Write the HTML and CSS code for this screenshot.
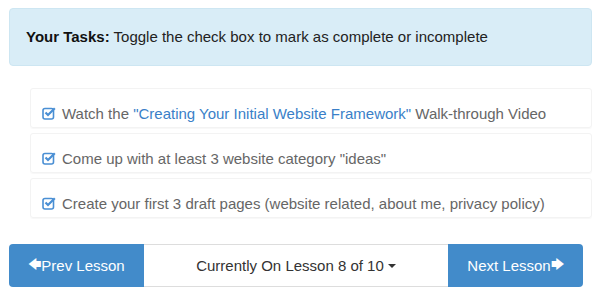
FILE: index.html
```html
<!DOCTYPE html>
<html lang="en">
<head>
    <meta charset="UTF-8">
    <title>Lesson Tasks</title>
    <link rel="stylesheet" href="styles.css">
</head>
<body>
    <div class="page">
        <div class="alert">
            <strong>Your Tasks:</strong> Toggle the check box to mark as complete or incomplete
        </div>

        <ul class="tasks">
            <li class="task">
                <svg class="check" viewBox="0 0 14 14" width="14" height="14">
                    <rect x="1" y="2.5" width="10.5" height="10.5" rx="2" fill="none" stroke="#4a8fd4" stroke-width="1.6"/>
                    <path d="M3.5 6.5 L6 9 L12.8 2.2" fill="none" stroke="#4a8fd4" stroke-width="2.2"/>
                </svg>
                <span>Watch the <a href="#">"Creating Your Initial Website Framework"</a> Walk-through Video</span>
            </li>
            <li class="task">
                <svg class="check" viewBox="0 0 14 14" width="14" height="14">
                    <rect x="1" y="2.5" width="10.5" height="10.5" rx="2" fill="none" stroke="#4a8fd4" stroke-width="1.6"/>
                    <path d="M3.5 6.5 L6 9 L12.8 2.2" fill="none" stroke="#4a8fd4" stroke-width="2.2"/>
                </svg>
                <span>Come up with at least 3 website category "ideas"</span>
            </li>
            <li class="task">
                <svg class="check" viewBox="0 0 14 14" width="14" height="14">
                    <rect x="1" y="2.5" width="10.5" height="10.5" rx="2" fill="none" stroke="#4a8fd4" stroke-width="1.6"/>
                    <path d="M3.5 6.5 L6 9 L12.8 2.2" fill="none" stroke="#4a8fd4" stroke-width="2.2"/>
                </svg>
                <span>Create your first 3 draft pages (website related, about me, privacy policy)</span>
            </li>
        </ul>

        <div class="lesson-nav">
            <a href="#" class="btn btn-primary"><span class="arrow">&#x1F844;</span>Prev Lesson</a>
            <button class="btn btn-current">Currently On Lesson 8 of 10 <span class="caret"></span></button>
            <a href="#" class="btn btn-primary">Next Lesson<span class="arrow">&#x1F846;</span></a>
        </div>
    </div>
</body>
</html>
```

FILE: styles.css
```css
body {
    margin: 0;
    background: #fff;
    font-family: "Liberation Sans", Arial, sans-serif;
    font-size: 15px;
    color: #333;
}

.page {
    padding: 8px 8px 0 9px;
}

.alert {
    background-color: #d9edf7;
    border: 1px solid #cde6f2;
    border-radius: 4px;
    padding: 19px 16px 19px 16px;
    color: #222;
    line-height: 18px;
}

.alert strong {
    color: #111;
}

.tasks {
    list-style: none;
    margin: 22px 0 0 21px;
    padding: 0;
}

/* text sits low in each row, like the original */
.task {
    display: flex;
    align-items: center;
    gap: 6px;
    box-sizing: border-box;
    height: 40px;
    padding: 10px 11px 0;
    margin-bottom: 5px;
    border: 1px solid #f3f3f3;
    border-radius: 3px;
    color: #666;
    white-space: nowrap;
    box-shadow: 0 1px 1px rgba(0, 0, 0, 0.03);
}

.task a {
    color: #3a7fc8;
    text-decoration: none;
}

.check {
    flex-shrink: 0;
}

.lesson-nav {
    display: flex;
    margin-top: 26px;
    width: 574px;
    height: 43px;
}

.btn {
    display: flex;
    align-items: center;
    justify-content: center;
    font-family: inherit;
    font-size: 15px;
    text-decoration: none;
    border: none;
    padding: 0;
    margin: 0;
}

.btn-primary {
    width: 135px;
    background-color: #428bca;
    color: #fff;
}

.btn-primary:first-child {
    border-radius: 4px 0 0 4px;
}

.btn-primary:last-child {
    border-radius: 0 4px 4px 0;
}

.btn-current {
    flex: 1;
    background: #fff;
    color: #333;
    border-top: 1px solid #ddd;
    border-bottom: 1px solid #ddd;
}

.arrow {
    font-size: 13px;
}

.caret {
    display: inline-block;
    width: 0;
    height: 0;
    margin-left: 4px;
    border-top: 4px solid #333;
    border-left: 4px solid transparent;
    border-right: 4px solid transparent;
}
```
